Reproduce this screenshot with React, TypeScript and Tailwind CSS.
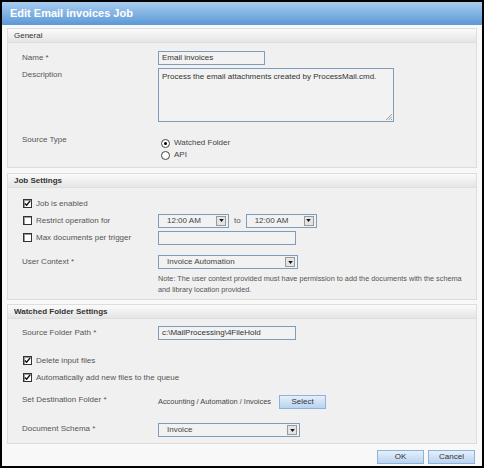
import React from "react";

const font = { fontFamily: '"Liberation Sans", Arial, sans-serif' };

const Check = ({ checked }: { checked?: boolean }) => (
  <span className="flex h-[9px] w-[9px] shrink-0 items-center justify-center border border-[#333] bg-white shadow-[inset_1px_1px_0_#999]">
    {checked && (
      <svg viewBox="0 0 8 8" className="h-[7px] w-[7px]">
        <path d="M1 4 L3 6 L7 1" fill="none" stroke="#111" strokeWidth="1.7" />
      </svg>
    )}
  </span>
);

const Radio = ({ checked }: { checked?: boolean }) => (
  <span className="flex h-[9px] w-[9px] shrink-0 items-center justify-center rounded-full border border-[#444] bg-white">
    {checked && <span className="h-[3px] w-[3px] rounded-full bg-black" />}
  </span>
);

const Select = ({ value, w }: { value: string; w: string }) => (
  <div className={`flex h-[14px] ${w} items-center justify-between border border-[#7f9db9] bg-[#f2f2f2] pl-[8px] pr-[2px]`}>
    <span className="text-[#444]">{value}</span>
    <span className="flex h-[10px] w-[10px] items-center justify-center border border-[#999] bg-[#e4e4e4]">
      <svg viewBox="0 0 6 4" className="h-[3px] w-[5px]">
        <path d="M0 0 H6 L3 4 Z" fill="#111" />
      </svg>
    </span>
  </div>
);

const Header = ({ title, bold }: { title: string; bold?: boolean }) => (
  <div className={`flex h-[15px] items-center border border-[#dedede] bg-gradient-to-b from-[#fbfbfb] to-[#e5e5e5] pl-[6px] text-[8px] text-[#333] ${bold ? "font-bold" : ""}`}>
    {title}
  </div>
);

const Label = ({ children }: { children: React.ReactNode }) => (
  <div className="w-[136px] shrink-0 text-[#555]">{children}</div>
);

const Button = ({ children, w }: { children: React.ReactNode; w: string }) => (
  <div className={`flex h-[14px] ${w} items-center justify-center border border-[#8eb2dc] bg-gradient-to-b from-[#e4effa] to-[#b9d4ef] text-[#333]`}>
    {children}
  </div>
);

export default function App() {
  return (
    <div className="h-[471px] w-[487px] bg-white text-[8px]" style={font}>
      <div className="flex h-[468px] w-[484px] flex-col border-2 border-black bg-[#f8f8f8]">
        <div className="flex h-[23px] shrink-0 items-center bg-gradient-to-b from-[#a7cdf0] to-[#5b98d5] pl-[8px] text-[11px] font-bold text-white">
          Edit Email invoices Job
        </div>

        <div className="flex flex-col px-[5px] pt-[3px]">
          {/* General */}
          <Header title="General" />
          <div className="flex flex-col border-x border-b border-[#dcdcdc] bg-[#f0f0f0] pb-[6px] pl-[14px] pt-[8px]">
            <div className="flex h-[14px] items-center">
              <Label>Name *</Label>
              <div className="flex h-[14px] w-[107px] items-center border border-[#7f9db9] bg-[#f2f2f2] pl-[3px] text-[#333]">
                Email invoices
              </div>
            </div>
            <div className="mt-[3px] flex items-start">
              <Label>
                <div className="pt-[1px]">Description</div>
              </Label>
              <div className="relative h-[54px] w-[236px] border border-[#7f9db9] bg-[#f2f2f2] pl-[3px] pt-[2px] text-[#333]">
                Process the email attachments created by ProcessMail.cmd.
                <svg viewBox="0 0 6 6" className="absolute bottom-[1px] right-[1px] h-[6px] w-[6px]">
                  <path d="M6 0 L0 6 M6 2.5 L2.5 6 M6 5 L5 6" stroke="#888" strokeWidth="0.8" />
                </svg>
              </div>
            </div>
            <div className="mt-[15px] flex items-start">
              <Label>
                <div className="-mt-[3px]">Source Type</div>
              </Label>
              <div className="flex flex-col pl-[3px]">
                <div className="flex h-[12px] items-center gap-[4px] text-[#444]">
                  <Radio checked />
                  <span>Watched Folder</span>
                </div>
                <div className="flex h-[12px] items-center gap-[4px] text-[#444]">
                  <Radio />
                  <span>API</span>
                </div>
              </div>
            </div>
          </div>

          {/* Job Settings */}
          <div className="mt-[5px]">
            <Header title="Job Settings" bold />
          </div>
          <div className="flex flex-col border-x border-b border-[#dcdcdc] bg-[#f0f0f0] pb-[4px] pl-[15px] pt-[7px]">
            <div className="flex h-[17px] items-center">
              <div className="flex w-[135px] shrink-0 items-center gap-[4px] text-[#555]">
                <Check checked />
                <span>Job is enabled</span>
              </div>
            </div>
            <div className="flex h-[17px] items-center">
              <div className="flex w-[135px] shrink-0 items-center gap-[4px] text-[#555]">
                <Check />
                <span>Restrict operation for</span>
              </div>
              <Select value="12:00 AM" w="w-[71px]" />
              <span className="mx-[5px] text-[#555]">to</span>
              <Select value="12:00 AM" w="w-[71px]" />
            </div>
            <div className="flex h-[17px] items-center">
              <div className="flex w-[135px] shrink-0 items-center gap-[4px] text-[#555]">
                <Check />
                <span>Max documents per trigger</span>
              </div>
              <div className="h-[14px] w-[138px] border border-[#7f9db9] bg-[#f2f2f2]" />
            </div>
            <div className="-ml-[1px] mt-[9px] flex items-start">
              <Label>
                <div className="pt-[1px]">User Context *</div>
              </Label>
              <div className="flex flex-col">
                <Select value="Invoice Automation" w="w-[140px]" />
                <div className="mt-[4px] whitespace-nowrap text-[7.3px] leading-[11px] text-[#555]">
                  Note: The user context provided must have permission to add the documents with the schema
                  <br />
                  and library location provided.
                </div>
              </div>
            </div>
          </div>

          {/* Watched Folder Settings */}
          <div className="mt-[4px]">
            <Header title="Watched Folder Settings" bold />
          </div>
          <div className="flex flex-col border-x border-b border-[#dcdcdc] bg-[#f0f0f0] pb-[6px] pl-[14px] pt-[7px]">
            <div className="flex h-[14px] items-center">
              <Label>Source Folder Path *</Label>
              <div className="flex h-[14px] w-[138px] items-center border border-[#7f9db9] bg-[#f2f2f2] pl-[3px] text-[#333]">
                c:\MailProcessing\4FileHold
              </div>
            </div>
            <div className="ml-[1px] mt-[12px] flex h-[17px] items-center gap-[4px] text-[#555]">
              <Check checked />
              <span>Delete input files</span>
            </div>
            <div className="ml-[1px] flex h-[17px] items-center gap-[4px] text-[#555]">
              <Check checked />
              <span>Automatically add new files to the queue</span>
            </div>
            <div className="mt-[8px] flex h-[15px] items-center">
              <Label>
                <div className="-mt-[3px]">Set Destination Folder *</div>
              </Label>
              <span className="w-[121px] shrink-0 whitespace-nowrap text-[7.4px] text-[#444]">
                Accounting / Automation / Invoices
              </span>
              <Button w="w-[47px]">Select</Button>
            </div>
            <div className="mt-[14px] flex h-[14px] items-center">
              <Label>
                <div className="-mt-[3px]">Document Schema *</div>
              </Label>
              <Select value="Invoice" w="w-[142px]" />
            </div>
          </div>

          {/* Footer */}
          <div className="mt-[6px] flex justify-end gap-[4px] pr-[2px]">
            <Button w="w-[47px]">OK</Button>
            <Button w="w-[47px]">Cancel</Button>
          </div>
        </div>
      </div>
    </div>
  );
}
